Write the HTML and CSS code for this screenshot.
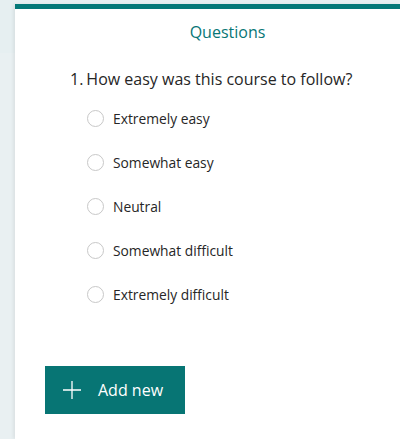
FILE: index.html
```html
<!DOCTYPE html>
<html>
<head>
<meta charset="utf-8">
<link rel="stylesheet" href="styles.css">
</head>
<body>
<div class="page">
  <div class="card">
    <div class="title">Questions</div>
    <div class="question">
      <span class="num">1.</span><span class="qtext">How easy was this course to follow?</span>
    </div>
    <div class="options">
      <label class="option"><span class="radio"></span><span>Extremely easy</span></label>
      <label class="option"><span class="radio"></span><span>Somewhat easy</span></label>
      <label class="option"><span class="radio"></span><span>Neutral</span></label>
      <label class="option"><span class="radio"></span><span>Somewhat difficult</span></label>
      <label class="option"><span class="radio"></span><span>Extremely difficult</span></label>
    </div>
    <button class="add">
      <svg width="18" height="18" viewBox="0 0 18 18"><path d="M9 0v18M0 9h18" stroke="#fff" stroke-width="1.3" fill="none"/></svg>
      <span>Add new</span>
    </button>
  </div>
</div>
</body>
</html>
```

FILE: styles.css
```css
html, body {
  margin: 0;
  padding: 0;
  width: 400px;
  height: 439px;
  overflow: hidden;
  background: #e6eff1;
  font-family: "Open Sans", "Noto Sans", sans-serif;
}
.page {
  padding: 4px 0 0 15px;
  height: 435px;
  background: linear-gradient(to bottom, #e6eff1 0, #e6eff1 53px, #e9f0f2 53px);
}
.card {
  height: 100%;
  background: #fff;
  border-top: 5px solid #047878;
  box-shadow: -2px 0 3px rgba(0,0,0,0.06);
  box-sizing: border-box;
}
.title {
  text-align: center;
  color: #077676;
  font-size: 16px;
  line-height: 20px;
  padding: 13px 0 0 40px;
}
.question {
  margin: 26px 0 0 55px;
  font-size: 16px;
  line-height: 22px;
  color: #262626;
}
.num { margin-right: 3px; }
.options {
  margin: 18px 0 0 72px;
  display: flex;
  flex-direction: column;
  gap: 24px;
}
.option {
  display: flex;
  align-items: center;
  height: 20px;
  font-size: 13.8px;
  color: #262626;
}
.radio {
  width: 15px;
  height: 15px;
  border: 1.5px solid #c8c8c8;
  border-radius: 50%;
  margin-right: 9px;
  flex: none;
}
.add {
  margin: 62px 0 0 30px;
  width: 140px;
  height: 48px;
  background: #077574;
  border: none;
  color: #fff;
  display: flex;
  align-items: center;
  padding: 0 0 0 18px;
  font-family: inherit;
  font-size: 16px;
  gap: 17px;
}
```
